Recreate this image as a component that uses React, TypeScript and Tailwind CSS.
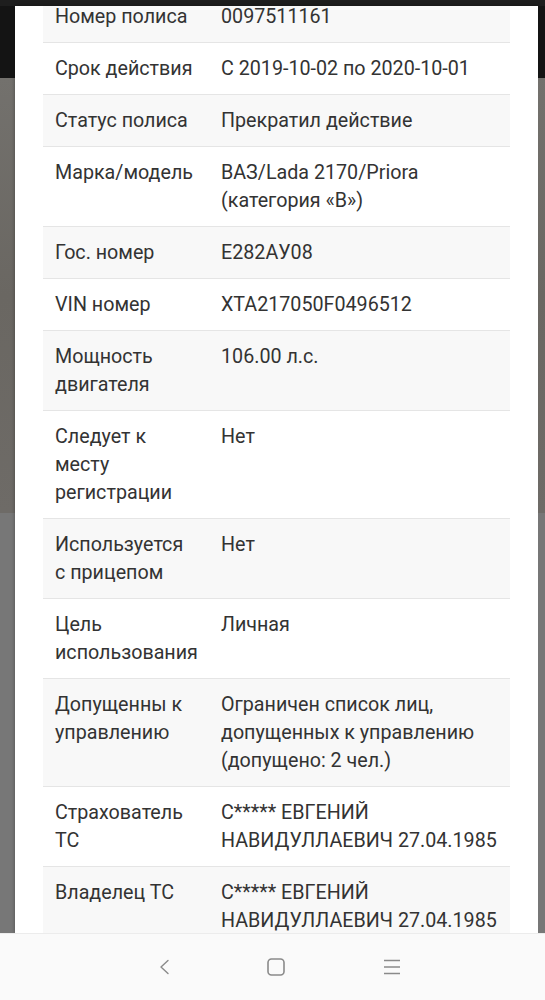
const rows: { label: string; value: string }[] = [
  { label: 'Номер полиса', value: '0097511161' },
  { label: 'Срок действия', value: 'С 2019-10-02 по 2020-10-01' },
  { label: 'Статус полиса', value: 'Прекратил действие' },
  { label: 'Марка/модель', value: 'ВАЗ/Lada 2170/Priora (категория «B»)' },
  { label: 'Гос. номер', value: 'Е282АУ08' },
  { label: 'VIN номер', value: 'XTA217050F0496512' },
  { label: 'Мощность двигателя', value: '106.00 л.с.' },
  { label: 'Следует к месту регистрации', value: 'Нет' },
  { label: 'Используется с прицепом', value: 'Нет' },
  { label: 'Цель использования', value: 'Личная' },
  { label: 'Допущенны к управлению', value: 'Ограничен список лиц, допущенных к управлению (допущено: 2 чел.)' },
  { label: 'Страхователь ТС', value: 'С***** ЕВГЕНИЙ НАВИДУЛЛАЕВИЧ 27.04.1985' },
  { label: 'Владелец ТС', value: 'С***** ЕВГЕНИЙ НАВИДУЛЛАЕВИЧ 27.04.1985' },
];

function Stripe({ side }: { side: 'left' | 'right' }) {
  return (
    <div className={`flex flex-col ${side === 'left' ? 'w-[15px]' : 'w-[7px]'}`}>
      <div className="h-[72px] bg-[#141414]" />
      <div className="h-[435px] bg-gradient-to-b from-[#73716d] via-[#6a6762] to-[#6e6b67]" />
      <div className="flex-1 bg-[#777777]" />
    </div>
  );
}

export default function App() {
  return (
    <div className="h-[1000px] w-[545px] flex flex-col bg-[#777777] overflow-hidden" style={{ fontFamily: 'Roboto, "Noto Sans", sans-serif' }}>
      <div className="h-[6px] bg-[#1e1e1e]" />

      <div className="flex-1 flex min-h-0">
        <Stripe side="left" />
        <div className="flex-1 bg-white overflow-hidden shadow-[0_0_4px_rgba(0,0,0,0.35)] px-[28px]">
          <div className="mt-[-15px]">
            {rows.map((row, i) => (
              <div
                key={row.label}
                className={`flex text-[19.7px] leading-[28px] text-[#333333] border-b border-[#e5e5e5] ${i % 2 === 0 ? 'bg-[#f8f8f8]' : 'bg-white'}`}
              >
                <div className="w-[178px] shrink-0 pl-3 pr-[24px] pt-3 pb-[11px]">{row.label}</div>
                <div className="flex-1 pt-3 pb-[11px]">{row.value}</div>
              </div>
            ))}
          </div>
        </div>
        <Stripe side="right" />
      </div>

      <div className="h-[67px] bg-[#fafafa] border-t border-[#ececec] flex items-center pl-[155px] pb-[1px]">
        <svg width="18" height="18" viewBox="0 0 18 18" className="text-[#8a8a8a]">
          <path d="M13 2.5 L6 9 L13 15.5" fill="none" stroke="currentColor" strokeWidth="1.4" strokeLinecap="round" strokeLinejoin="round" />
        </svg>
        <svg width="18" height="18" viewBox="0 0 18 18" className="ml-[94px] text-[#8a8a8a]">
          <rect x="1" y="1" width="16" height="16" rx="3.5" fill="none" stroke="currentColor" strokeWidth="1.6" />
        </svg>
        <svg width="18" height="18" viewBox="0 0 18 18" className="ml-[98px] text-[#8a8a8a]">
          <path d="M1 2.5 H17 M1 9 H17 M1 15.5 H17" fill="none" stroke="currentColor" strokeWidth="1.3" />
        </svg>
      </div>
    </div>
  );
}
